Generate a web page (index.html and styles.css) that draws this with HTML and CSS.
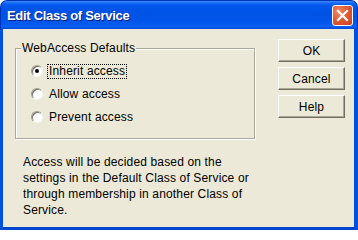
FILE: index.html
```html
<!DOCTYPE html>
<html>
<head>
<meta charset="utf-8">
<link rel="stylesheet" href="styles.css">
</head>
<body>
<div class="window">
  <div class="titlebar">
    <span class="title">Edit Class of Service</span>
    <span class="close">
      <svg width="13" height="13" viewBox="0 0 13 13"><path d="M2 2 L11 11 M11 2 L2 11" stroke="#fff" stroke-width="2.2" stroke-linecap="square"/></svg>
    </span>
  </div>
  <div class="client">
    <div class="main">
      <div class="group">
        <span class="legend">WebAccess Defaults</span>
        <div class="row"><span class="radio checked"></span><span class="label focus">Inherit access</span></div>
        <div class="row"><span class="radio"></span><span class="label">Allow access</span></div>
        <div class="row"><span class="radio"></span><span class="label">Prevent access</span></div>
      </div>
      <p class="desc">Access will be decided based on the<br>settings in the Default Class of Service or<br>through membership in another Class of<br>Service.</p>
    </div>
    <div class="buttons">
      <div class="btn">OK</div>
      <div class="btn">Cancel</div>
      <div class="btn">Help</div>
    </div>
  </div>
</div>
</body>
</html>
```
FILE: styles.css
```css
html, body {
  margin: 0;
  padding: 0;
  background: #fff;
}
.window {
  width: 358px;
  height: 230px;
  display: flex;
  flex-direction: column;
  font-family: "Liberation Sans", Arial, sans-serif;
  font-size: 12px;
  letter-spacing: 0.15px;
  color: #000;
}
.titlebar {
  height: 29px;
  flex: none;
  box-sizing: border-box;
  border-radius: 7px 7px 0 0;
  background: linear-gradient(to bottom, #3b8cf5 0px, #0a5ef0 3px, #0055ea 6px, #0052e4 50%, #0058ec 80%, #0a60f2 92%, #0048d8 100%);
  display: flex;
  align-items: center;
  justify-content: space-between;
  padding: 0 4px 0 6px;
  border: 1px solid #0031b8;
  border-bottom: none;
}
.title {
  color: #fff;
  font-weight: bold;
  font-size: 13px;
  letter-spacing: -0.3px;
  text-shadow: 1px 1px 0 #0a1e7c;
}
.close {
  width: 21px;
  height: 21px;
  box-sizing: border-box;
  border: 1px solid #fff;
  border-radius: 3px;
  background: radial-gradient(circle at 30% 30%, #f08a66 0%, #e15c34 45%, #c9401c 100%);
  display: flex;
  align-items: center;
  justify-content: center;
  margin-top: 1px;
}
.client {
  flex: 1;
  display: flex;
  background: #ece9d8;
  border-left: 3px solid #0050e0;
  border-right: 4px solid #0050e0;
  border-bottom: 3px solid #0045d0;
  padding: 10px 0 0 12px;
}
.main {
  display: flex;
  flex-direction: column;
}
.group {
  position: relative;
  margin-top: 9px;
  width: 240px;
  height: 91px;
  box-sizing: border-box;
  border: 1px solid #aca899;
  box-shadow: inset 1px 1px 0 #fff, 1px 1px 0 #fff;
  padding: 14px 0 0 15px;
  display: flex;
  flex-direction: column;
  gap: 7px;
}
.legend {
  position: absolute;
  left: 5px;
  top: -8px;
  background: #ece9d8;
  padding: 0 1px;
  line-height: 14px;
}
.row {
  display: flex;
  align-items: center;
  height: 16px;
}
.radio {
  width: 12px;
  height: 12px;
  box-sizing: border-box;
  border-radius: 50%;
  background: #fff;
  border: 1px solid;
  border-color: #9d9b90 #f6f5ef #f6f5ef #9d9b90;
  box-shadow: inset 1px 1px 0 #6f6e68;
  margin-right: 4px;
  position: relative;
  flex: none;
}
.radio.checked::after {
  content: "";
  position: absolute;
  left: 3px;
  top: 3px;
  width: 4px;
  height: 4px;
  border-radius: 50%;
  background: #000;
}
.label {
  border: 1px dotted transparent;
  padding: 0 1px;
  line-height: 13px;
}
.label.focus {
  border-color: #000;
}
.desc {
  margin: 15px 0 0 8px;
  line-height: 16px;
  white-space: nowrap;
}
.buttons {
  margin-left: 23px;
  display: flex;
  flex-direction: column;
  gap: 5px;
}
.btn {
  width: 67px;
  height: 23px;
  box-sizing: border-box;
  display: flex;
  align-items: center;
  justify-content: center;
  background: #ece9d8;
  border: 1px solid;
  border-color: #fff #716f64 #716f64 #fff;
  box-shadow: inset -1px -1px 0 #aca899;
}
```
